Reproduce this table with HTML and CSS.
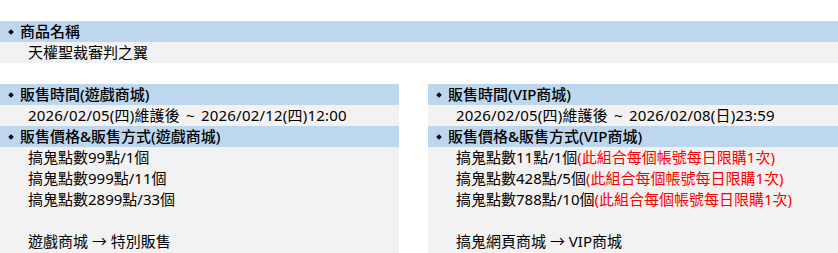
FILE: index.html
```html
<!DOCTYPE html>
<html lang="zh-Hant">
<head>
<meta charset="utf-8">
<link rel="stylesheet" href="styles.css">
</head>
<body>
<div class="page">
  <section class="block full">
    <div class="head">商品名稱</div>
    <div class="body"><div class="line">天權聖裁審判之翼</div></div>
  </section>
  <div class="cols">
    <div class="col left">
      <div class="head">販售時間(遊戲商城)</div>
      <div class="body"><div class="line date">2026/02/05(四)維護後 ~ 2026/02/12(四)12:00</div></div>
      <div class="head">販售價格&amp;販售方式(遊戲商城)</div>
      <div class="body grow">
        <div class="line">搞鬼點數99點/1個</div>
        <div class="line">搞鬼點數999點/11個</div>
        <div class="line">搞鬼點數2899點/33個</div>
        <div class="line empty"></div>
        <div class="line">遊戲商城 → 特別販售</div>
      </div>
    </div>
    <div class="col right">
      <div class="head">販售時間(VIP商城)</div>
      <div class="body"><div class="line date">2026/02/05(四)維護後 ~ 2026/02/08(日)23:59</div></div>
      <div class="head">販售價格&amp;販售方式(VIP商城)</div>
      <div class="body grow">
        <div class="line">搞鬼點數11點/1個<span class="note">(此組合每個帳號每日限購1次)</span></div>
        <div class="line">搞鬼點數428點/5個<span class="note">(此組合每個帳號每日限購1次)</span></div>
        <div class="line">搞鬼點數788點/10個<span class="note">(此組合每個帳號每日限購1次)</span></div>
        <div class="line empty"></div>
        <div class="line">搞鬼網頁商城 → VIP商城</div>
      </div>
    </div>
  </div>
</div>
</body>
</html>
```

FILE: styles.css
```css
html, body {
  margin: 0;
  padding: 0;
  background: #ffffff;
}
body {
  font-family: "Noto Sans", "Noto Sans CJK TC", "Microsoft JhengHei", sans-serif;
  font-size: 15px;
  color: #000000;
}
.page {
  padding-top: 21px;
}
.head {
  background: #bdd7ee;
  height: 21px;
  line-height: 21px;
  padding-left: 8px;
  display: flex;
  align-items: center;
  gap: 6px;
  font-weight: 500;
  white-space: nowrap;
}
.head::before {
  content: "";
  width: 4px;
  height: 4px;
  background: #000;
  transform: rotate(45deg);
  margin-left: 1px;
  margin-right: 1px;
  flex: none;
}
.body {
  background: #f2f2f2;
}
.line {
  height: 21px;
  line-height: 21px;
  padding-left: 28px;
  white-space: nowrap;
}
.date {
  word-spacing: 2px;
  letter-spacing: 0.2px;
}
.note {
  color: #ff0000;
}
.cols {
  margin-top: 21px;
  display: flex;
  gap: 29px;
}
.col {
  display: flex;
  flex-direction: column;
}
.left {
  width: 399px;
}
.right {
  flex: 1;
}
.grow {
  padding-bottom: 1px;
}
```
